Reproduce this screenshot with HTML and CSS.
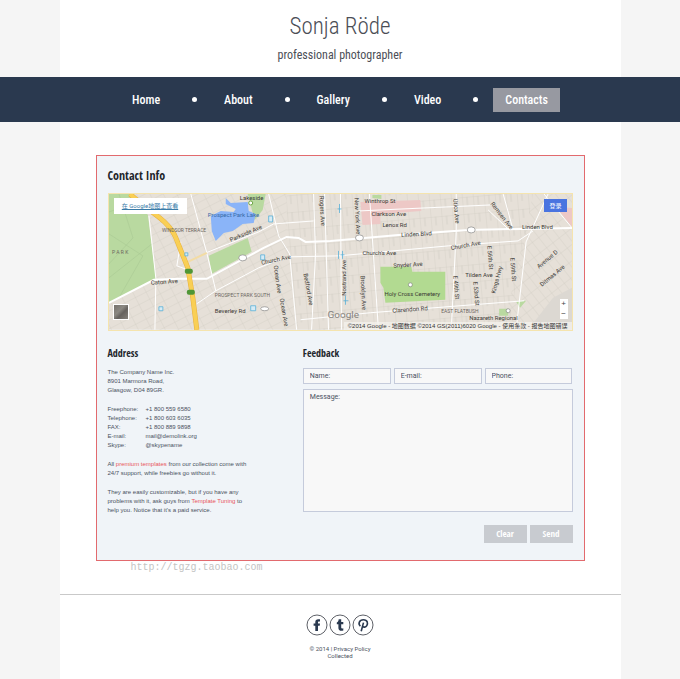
FILE: index.html
```
<!DOCTYPE html>
<html lang="en">
<head>
  <meta charset="UTF-8" />
  <meta name="viewport" content="width=device-width, initial-scale=1.0"/>
  <title>Sonja Röde - Contacts</title>
  <link rel="stylesheet" href="styles.css">
</head>
<body>
  <header class="header">
    <h1 class="logo">Sonja Röde</h1>
    <p class="tagline">professional photographer</p>
  </header>

  <nav class="menu">
    <a href="#">Home</a>
    <span class="dot"></span>
    <a href="#">About</a>
    <span class="dot"></span>
    <a href="#">Gallery</a>
    <span class="dot"></span>
    <a href="#">Video</a>
    <span class="dot"></span>
    <a href="#" class="current">Contacts</a>
  </nav>

  <main class="content">
    <section class="panel">
      <h2>Contact Info</h2>

      <div class="map">
        <svg class="map-image" viewBox="0 0 464 136" role="img" aria-label="Map">
          <defs>
            <pattern id="blocks" width="11" height="17" patternUnits="userSpaceOnUse" patternTransform="rotate(-5)">
              <path d="M0 0V17M0 0H11M5 0V9" class="lane" />
            </pattern>
            <pattern id="blocksWest" width="12" height="8" patternUnits="userSpaceOnUse" patternTransform="rotate(-27)">
              <path d="M0 0V8M0 0H12" class="lane" />
            </pattern>
            <pattern id="blocksEast" width="8" height="13" patternUnits="userSpaceOnUse" patternTransform="rotate(-38)">
              <path d="M0 0V13M0 0H8" class="lane" />
            </pattern>
          </defs>

          <rect width="464" height="136" fill="#e6e0d8" />
          <path d="M0 0H178V45L190 136H0Z" fill="url(#blocksWest)" />
          <path d="M178 0H425L400 136H190L178 45Z" fill="url(#blocks)" />
          <path d="M425 0H464V136H395Z" fill="url(#blocksEast)" />

          <!-- parks, lake, cemetery -->
          <path d="M0 0H21L39 21L47 85L0 109Z" class="park" />
          <path d="M0 18L28 8M0 40L34 62L10 104M0 84L43 50M10 0L24 44L0 70" class="trail" />
          <path d="M139 0H157L154 16L146 26Z" class="park" />
          <path d="M100 62L139 44L143 58L103 80Z" class="park" />
          <path d="M117 4L122 9L139 8L140 17L147 20L145 29L134 30L124 37L115 39L107 47L103 37L102 22L112 17L125 18L127 15L117 10Z" fill="#8ab4f8" />
          <path d="M272 73H303L304 78H337V106L277 109L275 94L272 89Z" fill="#b2da91" />
          <path d="M264 1H273V5L264 4ZM391 115H400V122H391ZM408 108L418 107L412 114Z" class="park" />
          <path d="M252 8L312 6L313 17L272 20V30L254 31Z" class="pink" />
          <path d="M448 13L464 14V33Z" class="pink" />
          <path d="M420 136L445 104L464 94V136Z" fill="#dcd8d2" />

          <!-- streets -->
          <path d="M0 109L45 86L70 85L98 85L155 54L178 43L190 44L197 48L222 47L290 41L360 36L464 34" class="street wide" />
          <path d="M97 59L150 38L165 30L205 27M88 110L107 97L150 74L178 63L230 62L340 52L410 47L425 37" class="street" />
          <path d="M40 22L47 85L46 136M82 0L98 59L107 97M72 48L68 72L79 76M160 0L170 42L181 60L188 136M205 0L207 60L203 136M232 0L233 136" class="street" />
          <path d="M348 0V38L343 136M440 0L418 48L408 136M380 16L401 36M395 0L405 36M436 0L464 34M250 17L382 11M262 119L416 107M192 126L262 119" class="street" />
          <path d="M216 0L220 136M261 0L270 136" class="street" />
          <path d="M79 68L98 59" fill="none" stroke="#f3dca4" stroke-width="2" />
          <path d="M21 0L36 13C52 24 62 32 67 44L79 74L84 104L88 136" class="highway-edge" />
          <path d="M21 0L36 13C52 24 62 32 67 44L79 74L84 104L88 136" class="highway" />

          <!-- route and transit markers -->
          <rect x="76" y="75" width="8" height="5" rx="2" fill="#4f9636" />
          <rect x="78" y="96" width="8" height="5" rx="2" fill="#4f9636" />
          <circle cx="142" cy="9" r="2" fill="#fff" stroke="#6ca644" stroke-width="1" />
          <g class="shield">
            <ellipse cx="134" cy="64" rx="4" ry="3" />
            <ellipse cx="251" cy="44" rx="4" ry="3" />
            <ellipse cx="363" cy="36" rx="4" ry="3" />
            <ellipse cx="156" cy="115" rx="4" ry="2" />
            <circle cx="302" cy="91" r="2" />
            <circle cx="400" cy="117" r="2" />
          </g>
          <g class="stop">
            <path d="M160 22H164V28H160ZM152 61H156V66H152ZM142 112H147V117H142ZM50 113H54V117H50ZM76 59H79V62H76Z" />
            <path d="M231 10V19M229 15H233M234 57V65M232 61H236M237 102V111M235 107H240M230 57V65" />
          </g>

          <g class="label">
            <text x="53" y="38" class="area">WINDSOR TERRACE</text>
            <text x="106" y="103" class="area">PROSPECT PARK SOUTH</text>
            <text x="333" y="119" class="area">EAST FLATBUSH</text>
            <text x="3" y="60" class="area">P A R K</text>
            <text x="131" y="6">Lakeside</text>
            <text x="99" y="23" fill="#376aa8">Prospect Park Lake</text>
            <text x="42" y="91" transform="rotate(-4 42 91)">Caton Ave</text>
            <text x="122" y="48" transform="rotate(-23 122 48)">Parkside Ave</text>
            <text x="153" y="71" transform="rotate(-12 153 71)">Church Ave</text>
            <text x="106" y="119">Beverley Rd</text>
            <text x="256" y="9">Winthrop St</text>
            <text x="263" y="22">Clarkson Ave</text>
            <text x="274" y="33">Lenox Rd</text>
            <text x="293" y="43" transform="rotate(-3 293 43)">Linden Blvd</text>
            <text x="254" y="61">Church's Ave</text>
            <text x="285" y="74" transform="rotate(-4 285 74)">Snyder Ave</text>
            <text x="276" y="102">Holy Cross Cemetery</text>
            <text x="284" y="119" transform="rotate(-4 284 119)">Clarendon Rd</text>
            <text x="343" y="56" transform="rotate(-10 343 56)">Church Ave</text>
            <text x="414" y="35">Linden Blvd</text>
            <text x="357" y="83">Tilden Ave</text>
            <text x="361" y="126">Nazareth Regional</text>
            <text x="382" y="10" transform="rotate(52 382 10)">Remsen Ave</text>
            <text x="434" y="93" transform="rotate(-40 434 93)">Ditmas Ave</text>
            <text x="431" y="75" transform="rotate(-40 431 75)">Avenue D</text>
            <text x="165" y="72" transform="rotate(82 165 72)">Ocean Ave</text>
            <text x="171" y="105" transform="rotate(80 171 105)">Ocean Ave</text>
            <text x="195" y="80" transform="rotate(80 195 80)">Bedford Ave</text>
            <text x="211" y="2" transform="rotate(87 211 2)">Rogers Ave</text>
            <text x="246" y="4" transform="rotate(87 246 4)">New York Ave</text>
            <text x="238" y="102" transform="rotate(-90 238 102)">Nostrand Ave</text>
            <text x="252" y="82" transform="rotate(87 252 82)">Brooklyn Ave</text>
            <text x="345" y="5" transform="rotate(85 345 5)">Utica Ave</text>
            <text x="345" y="82" transform="rotate(85 345 82)">E 49th St</text>
            <text x="379" y="52" transform="rotate(85 379 52)">E 56th St</text>
            <text x="365" y="88" transform="rotate(85 365 88)">E 53rd St</text>
            <text x="387" y="100" transform="rotate(-75 387 100)">Kings Hwy</text>
            <text x="402" y="64" transform="rotate(85 402 64)">E 59th St</text>
          </g>
          <text x="219" y="124" class="brand">Google</text>
        </svg>
        <a href="#" class="map-link">在 Google地图上查看</a>
        <button type="button" class="map-login">登录</button>
        <span class="map-satellite"></span>
        <div class="map-zoom">
          <button type="button">+</button>
          <button type="button">−</button>
        </div>
        <p class="map-credits">©2014 Google - 地图数据 ©2014 GS(2011)6020 Google - 使用条款 - 报告地图错误</p>
      </div>

      <div class="columns">
        <div class="address">
          <h3>Address</h3>
          <p>The Company Name Inc.<br>8901 Marmora Road,<br>Glasgow, D04 89GR.</p>
          <dl>
            <dt>Freephone:</dt><dd>+1 800 559 6580</dd>
            <dt>Telephone:</dt><dd>+1 800 603 6035</dd>
            <dt>FAX:</dt><dd>+1 800 889 9898</dd>
            <dt>E-mail:</dt><dd>mail@demolink.org</dd>
            <dt>Skype:</dt><dd>@skypename</dd>
          </dl>
          <p>All <a href="#">premium templates</a> from our collection come with<br>24/7 support, while freebies go without it.</p>
          <p>They are easily customizable, but if you have any<br>problems with it, ask guys from <a href="#">Template Tuning</a> to<br>help you. Notice that it's a paid service.</p>
        </div>

        <form class="feedback">
          <h3>Feedback</h3>
          <div class="fields">
            <input type="text" placeholder="Name:" aria-label="Name" />
            <input type="email" placeholder="E-mail:" aria-label="E-mail" />
            <input type="tel" placeholder="Phone:" aria-label="Phone" />
          </div>
          <textarea placeholder="Message:" aria-label="Message"></textarea>
          <div class="buttons">
            <button type="reset">Clear</button>
            <button type="button">Send</button>
          </div>
        </form>
      </div>
    </section>
    <p class="site-url">http://tgzg.taobao.com</p>
  </main>

  <footer class="footer">
    <div class="social">
      <a href="#" aria-label="Facebook">
        <svg viewBox="0 0 22 22"><circle cx="11" cy="11" r="10" /><path d="M9.3 17V11.8H7.6V9.5H9.3V8.1C9.3 6.1 10.4 5.2 12.2 5.2H14V7.5H12.9C12.2 7.5 12 7.8 12 8.4V9.5H14L13.7 11.8H12V17Z" /></svg>
      </a>
      <a href="#" aria-label="Tumblr">
        <svg viewBox="0 0 22 22"><circle cx="11" cy="11" r="10" /><path d="M9.7 5.2H12.2V8H14.3V10.2H12.2V13.4C12.2 14.5 12.9 14.8 14.3 14.2V16.4C11.8 17.4 9.4 16.6 9.4 14V10.2H7.8V8.4C9 8 9.6 6.8 9.7 5.2Z" /></svg>
      </a>
      <a href="#" aria-label="Pinterest">
        <svg viewBox="0 0 22 22"><circle cx="11" cy="11" r="10" /><path d="M8.4 12.2C5.8 10 7.2 5.8 11.4 5.8C15.8 5.8 16 9.4 14.8 11.6C13.8 13.4 11.6 13.6 10.8 12.3M11.5 8.6L9.2 17.2" class="line" /></svg>
      </a>
    </div>
    <p>© 2014 | <a href="#">Privacy Policy</a><br>Collected</p>
  </footer>
</body>
</html>
```
FILE: styles.css
```
* {
  box-sizing: border-box;
}

body {
  margin: 0;
  font-family: Roboto, 'Liberation Sans', sans-serif;
  font-size: 7px;
  line-height: 9px;
  color: #4a5160;
  background: #f5f5f5;
}

h1, h2, h3, p, dl, dd {
  margin: 0;
}

a {
  text-decoration: none;
}

.header,
.content,
.footer {
  width: 82.5%;
  margin: 0 auto;
  background: #fff;
}

.logo,
.tagline,
.menu {
  font-family: 'Roboto Condensed', 'Liberation Sans Narrow', sans-serif;
}

h2,
h3,
.buttons button {
  font-family: 'Open Sans Condensed', 'Roboto Condensed', sans-serif;
}

.header {
  padding: 8px 0 12px;
  text-align: center;
  color: #4b4e56;
}

.logo {
  font-size: 23px;
  line-height: 37px;
  font-weight: 300;
}

.tagline {
  font-size: 12px;
  line-height: 20px;
}

/* Menu */
.menu {
  display: flex;
  justify-content: center;
  align-items: center;
  gap: 15px;
  height: 45px;
  background: #2a394f;
}

.menu a {
  padding: 0 12px;
  font-size: 12px;
  line-height: 24px;
  font-weight: 500;
  color: #fff;
}

.menu .current {
  background: #9799a1;
}

.dot {
  width: 5px;
  height: 5px;
  margin-left: 5px;
  border-radius: 50%;
  background: #fff;
}

/* Contact panel */
.content {
  padding: 33px 36px 20px;
}

.panel {
  padding: 10px 11px 17px;
  border: 1px solid #e26a6e;
  background: #f0f4f8;
}

h2 {
  margin-bottom: 7px;
  font-size: 12px;
  line-height: 20px;
  color: #22252b;
}

h3 {
  margin-bottom: 7px;
  font-size: 10px;
  line-height: 16px;
  color: #22252b;
}

.map {
  position: relative;
  border: 1px solid #f5e4ae;
}

.map-image {
  display: block;
  width: 100%;
}

.lane { fill: none; stroke: #cdc7be; stroke-width: 0.6; }
.park { fill: #b9d9a0; }
.pink { fill: #edc8c6; }
.trail { fill: none; stroke: #a9c994; stroke-width: 0.6; }
.street { fill: none; stroke: #fff; stroke-width: 1; }
.wide { stroke-width: 2; }
.highway { fill: none; stroke: #f9cf55; stroke-width: 4; }
.highway-edge { fill: none; stroke: #e8b03c; stroke-width: 5; }
.shield { fill: #fff; stroke: #777; stroke-width: 0.6; }
.stop { fill: #d6ebf5; stroke: #58b0d8; stroke-width: 0.8; }

.label {
  font-size: 6px;
  fill: #3c3a36;
}

.area {
  font-size: 5px;
  fill: #6b665e;
}

.brand {
  font-size: 10px;
  fill: #85827d;
}

.map-link {
  position: absolute;
  top: 4px;
  left: 5px;
  width: 73px;
  font-family: Roboto, 'Noto Sans CJK SC', sans-serif;
  font-size: 6px;
  line-height: 16px;
  text-align: center;
  text-decoration: underline;
  color: #3a7ba8;
  background: #fff;
}

.map-login {
  position: absolute;
  top: 5px;
  right: 5px;
  padding: 0 5px;
  border: none;
  font-family: 'Noto Sans CJK SC', sans-serif;
  font-size: 6px;
  line-height: 13px;
  color: #fff;
  background: #4a74e0;
}

.map-satellite {
  position: absolute;
  left: 4px;
  bottom: 10px;
  width: 16px;
  height: 16px;
  border: 1px solid #fff;
  background: linear-gradient(135deg, #77736d, #8b8882 40%, #66625e 60%, #85817b);
}

.map-zoom {
  position: absolute;
  right: 4px;
  bottom: 11px;
  display: grid;
  background: #fff;
}

.map-zoom button {
  width: 8px;
  height: 10px;
  padding: 0;
  border: none;
  font-size: 8px;
  line-height: 10px;
  color: #444;
  background: none;
}

.map-credits {
  position: absolute;
  right: 0;
  bottom: 0;
  padding: 0 4px;
  font-family: 'Liberation Sans', 'Noto Sans CJK SC', sans-serif;
  font-size: 6px;
  line-height: 8px;
  white-space: nowrap;
  color: #333;
  background: rgba(245, 243, 240, 0.7);
}

.columns {
  display: grid;
  grid-template-columns: 42% 1fr;
  margin-top: 14px;
}

.address p,
.address dl {
  margin-bottom: 10px;
  font-family: 'Liberation Sans', Arial, sans-serif;
  font-size: 6px;
}

.address dl {
  display: grid;
  grid-template-columns: 38px 1fr;
}

.address a {
  color: #e8555a;
}

/* Feedback form */
.fields {
  display: grid;
  grid-template-columns: repeat(3, 1fr);
  gap: 3px;
  margin-bottom: 5px;
}

.fields input,
.feedback textarea {
  display: block;
  width: 100%;
  min-width: 0;
  margin: 0;
  padding: 0 6px;
  border: 1px solid #c5cbdb;
  border-radius: 0;
  font-family: inherit;
  font-size: 7px;
  line-height: 9px;
  color: #4a5160;
  background: #f8f8f8;
}

.fields input {
  height: 16px;
}

.feedback textarea {
  height: 123px;
  padding: 3px 6px;
  resize: none;
}

.feedback ::placeholder {
  color: #4a5160;
  opacity: 1;
}

.buttons {
  display: flex;
  justify-content: flex-end;
  gap: 3px;
  margin-top: 13px;
}

.buttons button {
  width: 43px;
  padding: 0;
  border: none;
  font-size: 9px;
  line-height: 18px;
  color: #fff;
  background: #c8cbd0;
}

.site-url {
  margin-left: 35px;
  font-family: 'Liberation Mono', monospace;
  font-size: 10px;
  line-height: 13px;
  color: #c4c4c4;
}

/* Footer */
.footer {
  min-height: 86px;
  padding-top: 19px;
  border-top: 1px solid #c9c9c9;
  text-align: center;
  font-size: 6px;
  line-height: 7px;
}

.footer a {
  color: #4a5160;
}

.social {
  display: flex;
  justify-content: center;
  gap: 1px;
  margin-bottom: 9px;
}

.social svg {
  display: block;
  width: 22px;
  height: 22px;
  fill: #2a394f;
}

.social circle {
  fill: #fff;
  stroke: #5d6067;
  stroke-width: 1;
}

.social .line {
  fill: none;
  stroke: #2a394f;
  stroke-width: 1.6;
}
```
